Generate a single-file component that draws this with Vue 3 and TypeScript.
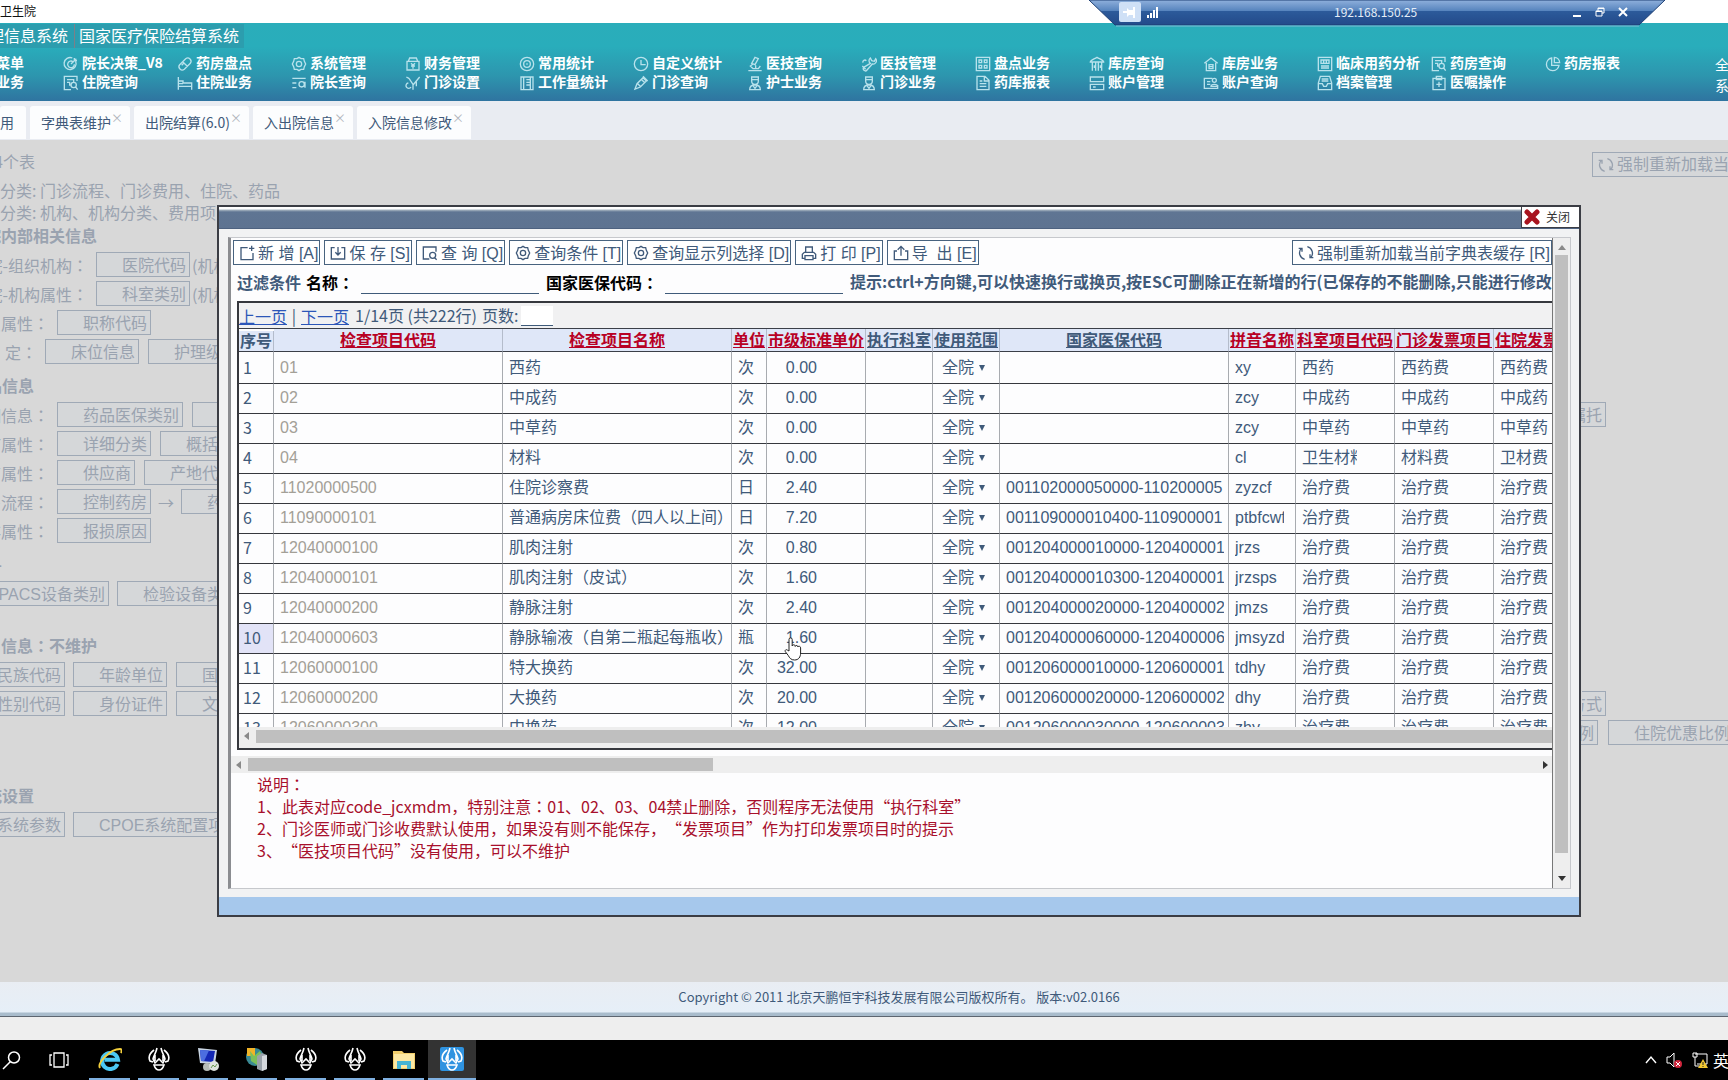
<script setup lang="ts">
import { ref } from 'vue'

interface MenuEntry { icon: string; label: string }
interface FormRow {
  label?: string
  labelWidth?: number
  edge?: string
  edgeWidth?: number
  buttons?: string[]
  note?: string
  arrow?: string
  rightEdge?: string
  rightWidth?: number
  tail?: string
}
interface Section { title: string; gap: string; rows: FormRow[] }

const icons: Record<string, string> = {
  target: 'M19 8a9 9 0 1 1-5-5M15 8.500a5 5 0 1 0 2 4M12 12l8-8M17 3v4h4',
  pill: 'M4 13l9-9a5 5 0 0 1 7 7l-9 9a5 5 0 0 1-7-7zM8.500 8.500l7 7M7 14l3-3',
  gear: 'M12 2l3 2 4 0 1 4 2 4-2 4-1 4-4 0-3 2-3-2-4 0-1-4-2-4 2-4 1-4 4 0zM12 8a4 4 0 1 0 0 8 4 4 0 0 0 0-8z',
  money: 'M3 8h18v13H3zM5 8l2-5h10l2 5M9 11l3 3 3-3M12 14v5M9 15h6',
  ring: 'M12 2a10 10 0 1 0 0 20 10 10 0 0 0 0-20zM12 7a5 5 0 1 0 0 10 5 5 0 0 0 0-10zM12 11v2',
  clock: 'M12 2a10 10 0 1 0 0 20 10 10 0 0 0 0-20zM12 6v7h7',
  scope: 'M12 2l5 2-5 9-5-2zM9 12l-4 3 4 4h8l3-4M2 22h20M13 14v5',
  steth: 'M14 11a5 5 0 0 1 0-8l2 4 4 1 2-4a5 5 0 0 1-5 8l-8 9a3 3 0 0 1-5-4zM3 10a3 3 0 0 1 5-3M2 15l5 5',
  grid: 'M2 2h20v20H2zM6 6h4v4H6zM14 6h4v4h-4zM6 14h4v4H6zM14 14h4v4h-4z',
  store: 'M2 9c0-3 5-4 10-7 5 3 10 4 10 7zM5 9v13M10 9v13M14 9v13M19 9v13M8 14v4M17 14v4',
  house: 'M2 11L12 3l10 8M5 10v12h14V10M9 13h6v6H9zM9 16h6',
  form: 'M2 2h20v20H2zM6 6h12v5H6zM10 6v5M14 6v5M6 15h12M6 18h12',
  search: 'M21 9V2H2v20h10M6 7h10v3M6 11h4v5M16 11a4 4 0 1 0 0 8 4 4 0 0 0 0-8zM19 18l3 4',
  pie: 'M10 3a9.500 9.500 0 1 0 11 11H10zM14 2v8h8a8 8 0 0 0-8-8z',
  bed: 'M2 3v19M2 17h20v5M22 17v-5H9V9H2M2 13h7',
  list: 'M2 5h20M2 12h6M2 19h6M16 10a4 4 0 1 0 0 8 4 4 0 0 0 0-8zM21 10v9',
  vee: 'M6 5l6 9v8M22 3L12 15M5 12a4 4 0 1 0 4 6M17 10v7M2 3l4 2',
  book: 'M3 3h18v19H3zM7 3v19M11 7h7M11 11h7M11 15h7M17 3v19',
  pen: 'M3 21l3-8 9-9 5 5-9 9zM12 6l6 6M15 2l7 7M7 13l4 4',
  nurse: 'M7 3h10v6a5 5 0 0 1-10 0zM7 7h10M4 22c0-5 3-7 8-7s8 2 8 7zM9 16l3 4 3-4',
  doc: 'M3 2h12l6 6v14H3zM14 2v7h7M7 9h4M7 13h10M7 17h10',
  cards: 'M2 3h20v7H2zM2 14h20v8H2zM6 18h4',
  idcard: 'M14 5H2v15h20v-5M6 10h5M6 14h5M17 5a3 3 0 1 0 0 6 3 3 0 0 0 0-6zM12 17c0-4 10-4 10 0z',
  inbox: 'M5 2h14l3 10v10H2V12zM2 13h6l2 4h4l2-4h6M7 6h10M7 9h10',
  plus: 'M3 5h18v17H3zM8 2h8v5H8zM12 10v8M8 14h8',
  add: 'M13 4H3v18h18V12M19 1v8M15 5h8',
  save: 'M7 4H2v17h20V4h-5M12 3v12M8 11l4 4 4-4',
  query: 'M21 10V3H2v18h9M16 11a4.500 4.500 0 1 0 0 9 4.500 4.500 0 0 0 0-9zM19 19l3 3',
  print: 'M7 11V3h10v8M5 20H2v-6l3-3h14l3 3v6h-3M6 16h12v6H6z',
  export: 'M6 9H2v13h20V9h-4M12 16V3M7 7l5-5 5 5',
  reload: 'M10 21.500A10 10 0 0 1 5 5M14 2.500a10 10 0 0 1 5 16.500M1 5h5v5M23 19h-5v-5',
}

const menu: MenuEntry[][] = [
  [{ icon: 'target', label: '院长决策_V8' }, { icon: 'search', label: '住院查询' }],
  [{ icon: 'pill', label: '药房盘点' }, { icon: 'bed', label: '住院业务' }],
  [{ icon: 'gear', label: '系统管理' }, { icon: 'list', label: '院长查询' }],
  [{ icon: 'money', label: '财务管理' }, { icon: 'vee', label: '门诊设置' }],
  [{ icon: 'ring', label: '常用统计' }, { icon: 'book', label: '工作量统计' }],
  [{ icon: 'clock', label: '自定义统计' }, { icon: 'pen', label: '门诊查询' }],
  [{ icon: 'scope', label: '医技查询' }, { icon: 'nurse', label: '护士业务' }],
  [{ icon: 'steth', label: '医技管理' }, { icon: 'nurse', label: '门诊业务' }],
  [{ icon: 'grid', label: '盘点业务' }, { icon: 'doc', label: '药库报表' }],
  [{ icon: 'store', label: '库房查询' }, { icon: 'cards', label: '账户管理' }],
  [{ icon: 'house', label: '库房业务' }, { icon: 'idcard', label: '账户查询' }],
  [{ icon: 'form', label: '临床用药分析' }, { icon: 'inbox', label: '档案管理' }],
  [{ icon: 'search', label: '药房查询' }, { icon: 'plus', label: '医嘱操作' }],
  [{ icon: 'pie', label: '药房报表' }],
]

const tabs = ['字典表维护', '出院结算(6.0)', '入出院信息', '入院信息修改']

const sections: Section[] = [
  {
    title: '院内部相关信息', gap: 'flush', rows: [
      { label: '院-组织机构', labelWidth: 88, buttons: ['医院代码'], note: '(机构)' },
      { label: '院-机构属性', labelWidth: 88, buttons: ['科室类别'], note: '(机构)' },
      { label: '员属性', labelWidth: 49, buttons: ['职称代码'] },
      { label: '定', labelWidth: 37, buttons: ['床位信息', '护理级别'] },
    ],
  },
  {
    title: '品信息', gap: 'near', rows: [
      { label: '细信息', labelWidth: 49, buttons: ['药品医保类别', '药品'], rightEdge: '嘱托', rightWidth: 25 },
      { label: '疗属性', labelWidth: 49, buttons: ['详细分类', '概括分类'] },
      { label: '商属性', labelWidth: 49, buttons: ['供应商', '产地代码'] },
      { label: '房流程', labelWidth: 49, buttons: ['控制药房'], arrow: '药房' },
      { label: '存属性', labelWidth: 49, buttons: ['报损原因'] },
    ],
  },
  {
    title: '-', gap: 'near', rows: [
      { edge: 'PACS设备类别', edgeWidth: 109, buttons: ['检验设备类别'] },
    ],
  },
  {
    title: '用信息：不维护', gap: 'mid', rows: [
      { edge: '民族代码', edgeWidth: 65, buttons: ['年龄单位', '国籍'] },
      { edge: '性别代码', edgeWidth: 65, buttons: ['身份证件', '文化'], rightEdge: '方式', rightWidth: 24 },
      { rightEdge: '比例', rightWidth: 17, tail: '住院优惠比例' },
    ],
  },
  {
    title: '统设置', gap: 'far', rows: [
      { edge: '系统参数', edgeWidth: 65, buttons: ['CPOE系统配置项'] },
    ],
  },
]

const tools = [
  { icon: 'add', text: '新 增 [A]' },
  { icon: 'save', text: '保 存 [S]' },
  { icon: 'query', text: '查 询 [Q]' },
  { icon: 'gear', text: '查询条件 [T]' },
  { icon: 'gear', text: '查询显示列选择 [D]' },
  { icon: 'print', text: '打 印 [P]' },
  { icon: 'export', text: '导  出 [E]' },
]

const columns = [
  { name: '序号', width: 35, kind: 'plain' },
  { name: '检查项目代码', width: 229, kind: 'key' },
  { name: '检查项目名称', width: 229, kind: 'key' },
  { name: '单位', width: 35, kind: 'key' },
  { name: '市级标准单价', width: 99, kind: 'key' },
  { name: '执行科室', width: 67, kind: 'link' },
  { name: '使用范围', width: 67, kind: 'link' },
  { name: '国家医保代码', width: 229, kind: 'link' },
  { name: '拼音名称', width: 67, kind: 'key' },
  { name: '科室项目代码', width: 99, kind: 'key' },
  { name: '门诊发票项目', width: 99, kind: 'key' },
  { name: '住院发票项目', width: 99, kind: 'key' },
]

const rows: string[][] = [
  ['01', '西药', '次', '0.00', '', 'xy', '西药', '西药费', '西药费'],
  ['02', '中成药', '次', '0.00', '', 'zcy', '中成药', '中成药', '中成药'],
  ['03', '中草药', '次', '0.00', '', 'zcy', '中草药', '中草药', '中草药'],
  ['04', '材料', '次', '0.00', '', 'cl', '卫生材料', '材料费', '卫材费'],
  ['11020000500', '住院诊察费', '日', '2.40', '001102000050000-110200005', 'zyzcf', '治疗费', '治疗费', '治疗费'],
  ['11090000101', '普通病房床位费（四人以上间）', '日', '7.20', '001109000010400-110900001', 'ptbfcwf', '治疗费', '治疗费', '治疗费'],
  ['12040000100', '肌肉注射', '次', '0.80', '001204000010000-120400001', 'jrzs', '治疗费', '治疗费', '治疗费'],
  ['12040000101', '肌肉注射（皮试）', '次', '1.60', '001204000010300-120400001', 'jrzsps', '治疗费', '治疗费', '治疗费'],
  ['12040000200', '静脉注射', '次', '2.40', '001204000020000-120400002', 'jmzs', '治疗费', '治疗费', '治疗费'],
  ['12040000603', '静脉输液（自第二瓶起每瓶收）', '瓶', '1.60', '001204000060000-120400006', 'jmsyzd', '治疗费', '治疗费', '治疗费'],
  ['12060000100', '特大换药', '次', '32.00', '001206000010000-120600001', 'tdhy', '治疗费', '治疗费', '治疗费'],
  ['12060000200', '大换药', '次', '20.00', '001206000020000-120600002', 'dhy', '治疗费', '治疗费', '治疗费'],
  ['12060000300', '中换药', '次', '12.00', '001206000030000-120600003', 'zhy', '治疗费', '治疗费', '治疗费'],
]

const notes = [
  '说明：',
  '1、此表对应code_jcxmdm，特别注意：01、02、03、04禁止删除，否则程序无法使用“执行科室”',
  '2、门诊医师或门诊收费默认使用，如果没有则不能保存，“发票项目”作为打印发票项目时的提示',
  '3、“医技项目代码”没有使用，可以不维护',
]

// full-width colons are set in a face that centres them
const pieces = (text: string): string[] => text.split(/(：)/)

const currentRow = ref(10)
const filterName = ref('')
const filterCode = ref('')
const pageNumber = ref('')
const apps = ['ie', 'bull', 'remote', 'server', 'bull', 'bull', 'folder', 'tile']
</script>

<template>
  <div class="screen">
    <div class="caption">卫生院</div>

    <div class="rdp">
      <svg class="rdp-shape" viewBox="0 0 576 27" preserveAspectRatio="none" aria-hidden="true">
        <defs>
          <linearGradient id="rdpFill" x1="0" y1="0" x2="0" y2="1">
            <stop offset="0" stop-color="#8fb0dc" />
            <stop offset="0.45" stop-color="#5482bc" />
            <stop offset="0.46" stop-color="#2c5a9a" />
            <stop offset="1" stop-color="#234a8a" />
          </linearGradient>
        </defs>
        <path d="M0 0H576L550 25H26z" fill="url(#rdpFill)" stroke="#1d3f74" />
        <path d="M27 26H550" stroke="#7fc0d8" />
      </svg>
      <div class="rdp-row">
        <button class="pin" aria-label="固定">
          <svg viewBox="0 0 20 20" width="20" height="20"><path d="M4 9h4V6l2 2h4V5h2v11h-2v-3h-4l-2 2v-4H4z" fill="#fff" /></svg>
        </button>
        <svg class="signal" viewBox="0 0 12 12" width="12" height="12"><path d="M1 9h2v3H1zM4 7h2v5H4zM7 4h2v8H7zM10 1h2v11h-2z" fill="#fff" /></svg>
        <span class="ip">192.168.150.25</span>
        <button class="win" aria-label="最小化"><svg viewBox="0 0 12 12" width="12" height="12"><path d="M2 10h8" stroke="#fff" stroke-width="2" /></svg></button>
        <button class="win" aria-label="还原"><svg viewBox="0 0 12 12" width="12" height="12"><path d="M2 5h6v5H2zM4 5V2h6v5H8M2 5.500h6M4 2.500h6" fill="none" stroke="#fff" /></svg></button>
        <button class="win" aria-label="关闭连接"><svg viewBox="0 0 12 12" width="12" height="12"><path d="M2 2l8 8M10 2l-8 8" stroke="#fff" stroke-width="2" /></svg></button>
      </div>
    </div>

    <header class="banner">
      <div class="systems">
        <a class="system cut" href="#">理信息系统</a>
        <a class="system whole" href="#">国家医疗保险结算系统</a>
      </div>
      <nav class="menu">
        <div class="menu-col first">
          <a class="entry clip" href="#">菜单</a>
          <a class="entry clip" href="#">业务</a>
        </div>
        <div v-for="(col, c) in menu" :key="c" class="menu-col">
          <a v-for="m in col" :key="m.label" class="entry" href="#">
            <svg class="menu-icon" viewBox="0 0 24 24"><path :d="icons[m.icon]" /></svg>
            <span>{{ m.label }}</span>
          </a>
        </div>
        <div class="menu-col last">
          <a class="plain" href="#">全</a>
          <a class="plain" href="#">系</a>
        </div>
      </nav>
    </header>

    <div class="tabs">
      <button class="tab tab-cut"><span>应用</span></button>
      <button v-for="t in tabs" :key="t" class="tab"><span>{{ t }}</span><i class="x">×</i></button>
    </div>

    <main class="stage">
      <div class="page">
        <div class="intro">
          <div class="top-line">
            <span class="clip w35">4个表</span>
            <button class="dim-btn force">
              <svg class="tool-icon" viewBox="0 0 24 24"><path :d="icons.reload" /></svg>
              <span>强制重新加载当前</span>
            </button>
          </div>
          <p>分类: 门诊流程、门诊费用、住院、药品</p>
          <p>分类: 机构、机构分类、费用项目</p>
        </div>
        <section v-for="(s, i) in sections" :key="i" :class="['section', s.gap]">
          <h2 :class="{ long: s.title.length > 5, dash: s.title === '-' }">
            <span v-for="(p, k) in pieces(s.title)" :key="k" :class="{ colon: p === '：' }">{{ p }}</span>
          </h2>
          <div v-for="(r, k) in s.rows" :key="k" class="row">
            <span v-if="r.label" class="clip" :style="{ width: r.labelWidth + 'px' }">{{ r.label }}<span class="colon">：</span></span>
            <span v-if="r.edge" class="clip" :style="{ width: r.edgeWidth + 'px' }"><button class="dim-btn">{{ r.edge }}</button></span>
            <button v-for="b in r.buttons" :key="b" class="dim-btn">{{ b }}</button>
            <span v-if="r.note" class="note-text">{{ r.note }}</span>
            <template v-if="r.arrow"><span class="arrow">→</span><button class="dim-btn">{{ r.arrow }}</button></template>
            <span v-if="r.rightEdge" class="right-part">
              <span class="clip" :style="{ width: r.rightWidth + 'px' }"><button class="dim-btn">{{ r.rightEdge }}</button></span>
              <span class="tail"><button v-if="r.tail" class="dim-btn">{{ r.tail }}</button></span>
            </span>
          </div>
        </section>
      </div>

      <div class="dialog" role="dialog" aria-label="字典表">
        <div class="dialog-head">
          <button class="close">
            <svg viewBox="0 0 16 16" width="16" height="16"><path d="M3 3l10 10M13 3L3 13" stroke="#a8141f" stroke-width="5" stroke-linecap="round" /></svg>
            <span>关闭</span>
          </button>
        </div>
        <div class="frame">
          <div class="content">
            <div class="toolbar">
              <button v-for="t in tools" :key="t.text" class="tool">
                <svg class="tool-icon" viewBox="0 0 24 24"><path :d="icons[t.icon]" /></svg>
                <span>{{ t.text }}</span>
              </button>
              <button class="tool refresh">
                <svg class="tool-icon" viewBox="0 0 24 24"><path :d="icons.reload" /></svg>
                <span>强制重新加载当前字典表缓存 [R]</span>
              </button>
            </div>

            <div class="filters">
              <strong class="lead">过滤条件</strong>
              <label for="f-name">名称<span class="colon">：</span></label>
              <input id="f-name" v-model="filterName" type="text" />
              <label for="f-code">国家医保代码<span class="colon">：</span></label>
              <input id="f-code" v-model="filterCode" type="text" />
              <strong class="hint">提示:ctrl+方向键,可以快速换行或换页,按ESC可删除正在新增的行(已保存的不能删除,只能进行修改</strong>
            </div>

            <div class="sheet">
              <div class="pager">
                <a href="#">上一页</a><span class="bar">|</span><a href="#">下一页</a>
                <span class="count">1/14页 (共222行)</span>
                <label for="page-no">页数:</label>
                <input id="page-no" v-model="pageNumber" type="text" />
              </div>
              <div class="viewport">
                <table>
                  <colgroup>
                    <col v-for="c in columns" :key="c.name" :style="{ width: c.width + 'px' }" />
                  </colgroup>
                  <thead>
                    <tr>
                      <th v-for="c in columns" :key="c.name" :class="c.kind">{{ c.name }}</th>
                    </tr>
                  </thead>
                  <tbody>
                    <tr v-for="(r, i) in rows" :key="i" @click="currentRow = i + 1">
                      <td :class="['seq', { on: currentRow === i + 1 }]">{{ i + 1 }}</td>
                      <td class="code"><div>{{ r[0] }}</div></td>
                      <td><div>{{ r[1] }}</div></td>
                      <td><div>{{ r[2] }}</div></td>
                      <td class="price"><div>{{ r[3] }}</div></td>
                      <td></td>
                      <td class="scope">
                        <div>
                          <select :aria-label="'使用范围 ' + (i + 1)"><option>全院</option></select><i class="drop"></i>
                        </div>
                      </td>
                      <td><div>{{ r[4] }}</div></td>
                      <td class="pinyin"><div>{{ r[5] }}</div></td>
                      <td class="short"><div>{{ r[6] }}</div></td>
                      <td class="short"><div>{{ r[7] }}</div></td>
                      <td class="short"><div>{{ r[8] }}</div></td>
                    </tr>
                  </tbody>
                </table>
              </div>
              <div class="hbar inner"><i class="tri left"></i><span class="thumb wide"></span></div>
            </div>

            <div class="hbar"><i class="tri left"></i><span class="thumb part"></span><i class="tri right"></i></div>

            <div class="remarks">
              <p v-for="n in notes" :key="n"><span v-for="(p, k) in pieces(n)" :key="k" :class="{ colon: p === '：' }">{{ p }}</span></p>
            </div>
          </div>
          <div class="vbar"><i class="tri up"></i><span class="vthumb"></span><i class="tri down"></i></div>
        </div>
        <div class="dialog-foot"></div>
      </div>

      <svg class="hand" viewBox="0 0 18 24" width="18" height="24" aria-hidden="true">
        <path d="M5 14V2.500a1.600 1.600 0 0 1 3.200 0V9c0-1.600 3-1.600 3 .4 0-1.400 2.800-1.200 2.800.6 0-1.200 2.600-1 2.600.8V16c0 4-2 7-6 7-3.600 0-5-2-6.400-4.600L1.300 14.600c-.8-1.600 1.200-2.600 2.200-1.400z" fill="#fff" stroke="#222" />
      </svg>
    </main>

    <footer class="copyright">Copyright © 2011 北京天鹏恒宇科技发展有限公司版权所有。 版本:v02.0166</footer>
    <div class="gutter"></div>

    <div class="taskbar">
      <button class="sys search-btn" aria-label="搜索"><svg viewBox="0 0 20 20" width="20" height="20"><path d="M13 2a5.500 5.500 0 1 0 0 11 5.500 5.500 0 0 0 0-11zM9 12l-7 7" fill="none" stroke="#fff" stroke-width="1.500" /></svg></button>
      <button class="sys view-btn" aria-label="任务视图"><svg viewBox="0 0 20 20" width="20" height="20"><path d="M5 3h10v14H5zM3 5H1v10h2M17 5h2v10h-2" fill="none" stroke="#fff" stroke-width="1.300" /></svg></button>
      <button v-for="(a, i) in apps" :key="i" :class="['app', a]" :aria-label="'应用 ' + (i + 1)">
        <svg v-if="a === 'ie'" viewBox="0 0 24 24" width="24" height="24">
          <path d="M19.500 17A8 8 0 1 1 20 12.800H6.500" fill="none" stroke="#4cc8f4" stroke-width="4" />
          <path d="M2 21C-1 16 12 2 22 2c2 0 2 2 1 4" fill="none" stroke="#f3cf3c" stroke-width="2" />
        </svg>
        <svg v-else-if="a === 'remote'" viewBox="0 0 24 24" width="24" height="24">
          <path d="M2 1l19 2-2 14-15-1z" fill="#c8d4e2" /><path d="M4 3l15 1-2 11-12-1z" fill="#1428b4" /><path d="M4 3l9 .6L8 14.200l-3-.2z" fill="#4c6ee0" />
          <circle cx="11" cy="20" r="4" fill="#b6bcb8" /><circle cx="18" cy="19" r="5" fill="#dde2dd" /><path d="M15 21l2-3 2 2 2-3" fill="none" stroke="#6a9a50" />
        </svg>
        <svg v-else-if="a === 'server'" viewBox="0 0 24 24" width="24" height="24">
          <circle cx="10" cy="10" r="9" fill="#3a8a94" /><path d="M2 1h8v8H2z" fill="#f0b428" /><path d="M5 4l4 5 6-5 2 6-5 8-6-4z" fill="#7cc05a" />
          <path d="M12 9l5-3 5 2v14l-5 2-5-2z" fill="#9aa2aa" /><path d="M17 9l5-1v14l-5 2z" fill="#d4d8dc" />
        </svg>
        <svg v-else-if="a === 'folder'" viewBox="0 0 24 24" width="24" height="24">
          <path d="M1 4h9l2 2h11v16H1z" fill="#f2cf6c" /><path d="M2 7h20v14H2z" fill="#fce8a4" /><path d="M5 22v-8h14v8h-4v-4H9v4z" fill="#46b4d4" />
        </svg>
        <svg v-else viewBox="0 0 24 24" width="24" height="24">
          <rect v-if="a === 'tile'" width="24" height="24" rx="2" fill="#2f93e0" />
          <path d="M7 3C3 6 1 10 3 14l3 1M17 3c4 3 6 7 4 11l-3 1M10 1C9 6 7 8 6 12l2 4 4-4 4 4 2-4c-1-4-3-6-4-11M7 18c1 3 3 5 5 5s4-2 5-5zM8 8v6M16 8v6" fill="none" stroke="#fff" stroke-width="1.600" />
        </svg>
      </button>
      <div class="tray">
        <svg viewBox="0 0 12 12" width="12" height="12"><path d="M1 9l5-6 5 6" fill="none" stroke="#fff" stroke-width="1.400" /></svg>
        <svg viewBox="0 0 18 18" width="18" height="18"><path d="M2 6h3l4-4v14l-4-4H2z" fill="none" stroke="#fff" /><circle cx="13" cy="13" r="4" fill="#d0253c" /><path d="M11 11l4 4M15 11l-4 4" stroke="#fff" /></svg>
        <svg viewBox="0 0 18 18" width="18" height="18"><path d="M4 3h12v10H6M2 2h4v4H2zM4 6v9h4" fill="none" stroke="#fff" /><path d="M12 8l5 9H7z" fill="#f2c832" /><path d="M12 11v3M12 15v1" stroke="#222" /></svg>
        <span>英</span>
      </div>
    </div>
  </div>
</template>

<style>
body {
  margin: 0;
  background: #d8d8d8;
}
</style>

<style scoped>
* {
  box-sizing: border-box;
}
.screen {
  position: relative;
  display: flex;
  flex-direction: column;
  min-height: 100vh;
  overflow: hidden;
  font: 16px/22px "Noto Sans CJK SC", "Open Sans", sans-serif;
  text-spacing-trim: space-all;
  color: #405a7a;
}
button {
  font: inherit;
  color: inherit;
  margin: 0;
  padding: 0;
  border: 0;
  background: none;
  white-space: pre;
}
a {
  color: inherit;
  text-decoration: none;
}
p,
h2 {
  margin: 0;
}
.colon {
  font-family: "Noto Sans CJK TC", sans-serif;
}
.clip {
  display: flex;
  flex: none;
  justify-content: flex-end;
  overflow: hidden;
  white-space: nowrap;
}

/* window caption and remote bar */
.caption {
  height: 23px;
  background: #fff;
  color: #111;
  font-size: 12px;
  line-height: 22px;
}
.rdp {
  position: absolute;
  top: 0;
  right: 63px;
  width: 576px;
  height: 27px;
}
.rdp-shape {
  position: absolute;
  width: 576px;
  height: 27px;
}
.rdp-row {
  position: relative;
  display: flex;
  align-items: center;
  height: 23px;
  padding: 0 36px 0 30px;
}
.pin {
  width: 22px;
  height: 20px;
  border-radius: 2px;
  background: #cfe0f6;
}
.pin svg {
  display: block;
}
.signal {
  margin-left: 5px;
}
.ip {
  flex: 1;
  padding-left: 176px;
  color: #e4edf8;
  font-size: 12px;
}
.win {
  display: flex;
  width: 12px;
  margin-left: 11px;
}

/* banner */
.banner {
  height: 78px;
  background: linear-gradient(#2aadba 0, #29adbb 30%, #2d95ae 68%, #2f74a0 100%);
  color: #fff;
}
.systems {
  display: flex;
  height: 25px;
  padding-top: 1px;
}
.system {
  display: flex;
  align-items: center;
  padding-bottom: 3px;
  white-space: nowrap;
  background: #2c9dae;
  line-height: 20px;
}
.cut {
  justify-content: flex-end;
  width: 75px;
  padding-right: 6px;
  border-right: 1px solid #7d7f88;
  overflow: hidden;
}
.whole {
  padding-right: 5px;
  padding-left: 4px;
}
.menu {
  display: flex;
  padding-top: 5px;
  font-size: 14px;
  font-weight: 700;
}
.menu-col {
  flex: none;
  width: 114px;
}
.first {
  width: 63px;
  padding-right: 39px;
}
.entry {
  display: flex;
  align-items: center;
  gap: 3px;
  height: 19px;
  line-height: 19px;
  white-space: nowrap;
}
.entry.clip {
  justify-content: flex-end;
}
.menu-icon {
  flex: none;
  width: 16px;
  height: 16px;
  margin-top: 3px;
  fill: none;
  stroke: #b8e2ec;
  stroke-width: 2;
}
.last {
  width: auto;
  margin-left: 56px;
  font-weight: 400;
}
.plain {
  display: block;
  margin-top: 2px;
  line-height: 19px;
}

/* tabs */
.tabs {
  display: flex;
  gap: 4px;
  height: 39px;
  padding-top: 5px;
  background: #e9ecf2;
}
.tab {
  display: flex;
  align-items: center;
  height: 33px;
  padding: 0 9px 2px 11px;
  border-radius: 3px 3px 0 0;
  background: #fcfdfe;
  font-size: 14px;
}
.tab-cut {
  justify-content: flex-end;
  width: 26px;
  padding: 0 12px 2px 0;
  overflow: hidden;
}
.x {
  width: 10px;
  height: 22px;
  color: #b0b4bc;
  font-size: 12px;
  font-style: normal;
  line-height: 14px;
  text-align: right;
}

/* dimmed page */
.stage {
  position: relative;
  flex: 1;
  background: #d8d8d8;
}
.page {
  padding-top: 10px;
  overflow: hidden;
  color: #9aa3b0;
  white-space: nowrap;
}
.top-line {
  display: flex;
  justify-content: space-between;
  height: 29px;
}
.w35 {
  width: 35px;
}
.force {
  display: flex;
  align-items: center;
  gap: 3px;
  width: 136px;
  margin-top: 2px;
  overflow: hidden;
}
.top-line .force {
  padding: 0 0 0 5px;
  border-right: 0;
}
.flush {
  margin-top: 1px;
}
.near {
  margin-top: 10px;
}
.mid {
  margin-top: 28px;
}
.far {
  margin-top: 39px;
}
h2 {
  display: flex;
  justify-content: flex-end;
  width: 34px;
  margin-bottom: 6px;
  overflow: hidden;
  font-size: 16px;
  line-height: 22px;
}
h2.long {
  width: 97px;
}
h2.dash {
  width: 2px;
}
.row {
  display: flex;
  align-items: center;
  height: 25px;
  margin-bottom: 4px;
}
.dim-btn {
  flex: none;
  height: 25px;
  padding: 2px 3px 0 25px;
  border: 1px solid #9fa9b6;
  background: #d5d7d9;
  line-height: 22px;
}
.row > .clip + .dim-btn {
  margin-left: 8px;
}
.row > .dim-btn + .dim-btn {
  margin-left: 9px;
}
.note-text {
  margin-left: 2px;
}
.arrow {
  width: 16px;
  margin: 0 7px;
}
.right-part {
  display: flex;
  margin-left: auto;
}
.tail {
  display: flex;
  width: 122px;
  padding-left: 2px;
}
.row:last-child .tail {
  width: 130px;
  padding-left: 10px;
}

/* dialog */
.dialog {
  position: absolute;
  top: 65px;
  left: 217px;
  right: 147px;
  border: 2px solid #3b3d44;
  background: #f1f2f3;
}
.dialog-head {
  display: flex;
  justify-content: flex-end;
  height: 22px;
  border-bottom: 1px solid #4e6280;
  background: linear-gradient(#fff 0, #fff 2px, #a4b2be 3px, #5f7593 5px, #5e7391 100%);
}
.close {
  display: flex;
  align-items: center;
  gap: 6px;
  width: 58px;
  height: 21px;
  padding-left: 2px;
  border: 1px solid #3b3d44;
  border-top: 0;
  border-right: 0;
  background: #fff;
  color: #333;
  font-size: 12px;
}
.frame {
  display: flex;
  margin: 8px 8px 8px 9px;
  border: 1px solid #c6c8cc;
  border-left: 3px solid #8b8d91;
}
.content {
  flex: 1;
  min-width: 0;
  height: 650px;
  overflow: hidden;
  background: #fdfdfe;
}
.toolbar {
  display: flex;
  gap: 4px;
  padding: 2px 0 0 2px;
}
.tool {
  display: flex;
  align-items: center;
  gap: 3px;
  height: 25px;
  padding: 0 1px 0 5px;
  border: 1px solid #48637f;
  background: #fff;
}
.tool span,
.dim-btn {
  font-family: "Liberation Sans", "Noto Sans CJK SC", sans-serif;
}
.tool span {
  padding-top: 2px;
}
.refresh {
  margin-left: auto;
}
.tool-icon {
  flex: none;
  width: 16px;
  height: 16px;
  fill: none;
  stroke: currentColor;
  stroke-width: 2;
}
.filters {
  display: flex;
  align-items: center;
  height: 36px;
  padding: 0 0 2px 6px;
  white-space: nowrap;
}
.filters > * {
  flex: none;
}
.filters label {
  color: #000;
  font-weight: 700;
}
.lead,
.hint {
  font-weight: 700;
}
.lead {
  margin-right: 5px;
}
.filters input {
  width: 178px;
  height: 24px;
  margin: 0 7px;
  padding: 0;
  border: 0;
  border-bottom: 1px solid #3f5b7a;
  background: none;
  font: inherit;
}
.hint {
  padding-bottom: 3px;
}

/* sheet */
.sheet {
  margin-left: 6px;
  border: 2px solid #36383e;
  border-right: 0;
}
.pager {
  display: flex;
  align-items: center;
  height: 26px;
  padding: 0 0 2px;
  border-bottom: 1px solid #3b3f48;
  background: #f1f1f2;
  white-space: nowrap;
}
.pager a {
  padding-top: 2px;
  color: #2c56b8;
  text-decoration: underline;
}
.bar {
  width: 14px;
  text-align: center;
}
.count {
  margin: 0 5px 0 6px;
}
.pager input {
  width: 32px;
  height: 20px;
  margin-top: 2px;
  margin-left: 3px;
  padding: 0;
  border: 0;
  border-bottom: 1px solid #3f5b7a;
  background: #fff;
  font: inherit;
}
.viewport {
  height: 398px;
  overflow: hidden;
}
table {
  width: 1354px;
  table-layout: fixed;
  border-collapse: separate;
  border-spacing: 0;
}
th {
  height: 21px;
  padding: 0 0 2px;
  border-right: 1px solid #b4bccb;
  border-bottom: 1px solid #3b3f48;
  background: #dfe7f8;
  font-weight: 700;
  line-height: 18px;
  white-space: nowrap;
}
th.link,
th.key {
  text-decoration: underline;
}
th.key {
  color: #b80024;
}
td {
  height: 30px;
  padding: 0 4px 2px 6px;
  border-right: 1px solid #a8abb0;
  border-bottom: 1px solid #36383e;
  background: #fdfdfe;
  font-family: "Liberation Sans", "Noto Sans CJK SC", sans-serif;
  line-height: 22px;
}
tbody tr:first-child td {
  height: 32px;
  padding-top: 2px;
}
td div {
  overflow: hidden;
  white-space: nowrap;
}
td.seq {
  padding-bottom: 4px;
  padding-left: 4px;
  font-family: "Noto Sans CJK SC", sans-serif;
}
td.on {
  background: #e2e3f7;
}
.code {
  color: #a3a097;
}
.price div {
  width: 44px;
  text-align: right;
}
.pinyin div {
  width: 49px;
}
.short div {
  width: 55px;
}
td.scope {
  padding-left: 9px;
}
.scope div {
  display: flex;
  align-items: center;
}
select {
  width: 33px;
  margin: 0;
  padding: 0;
  border: 0;
  appearance: none;
  background: none;
  color: inherit;
  font: inherit;
}
.drop {
  margin-left: 4px;
  border: 3px solid transparent;
  border-top: 6px solid #3f5b7a;
  border-bottom: 0;
}

/* scroll bars */
.hbar {
  display: flex;
  align-items: center;
  height: 17px;
  margin-top: 6px;
  padding: 0 4px 0 5px;
  background: #eee;
}
.inner {
  height: 21px;
  margin-top: 0;
  padding: 0 0 3px 5px;
}
.thumb {
  height: 13px;
  margin-left: 7px;
  background: #bfbfbf;
}
.wide {
  flex: 1;
}
.part {
  width: 465px;
}
.tri {
  flex: none;
  border: 4px solid transparent;
}
.left {
  border-left: 0;
  border-right: 5px solid #8a8a8a;
}
.right {
  margin-left: auto;
  border-right: 0;
  border-left: 5px solid #333;
}
.up {
  border-top: 0;
  border-bottom: 5px solid #8a8a8a;
}
.down {
  margin-top: auto;
  border-bottom: 0;
  border-top: 5px solid #333;
}
.vbar {
  display: flex;
  flex-direction: column;
  align-items: center;
  width: 18px;
  padding: 7px 0;
  border-left: 1px solid #777;
  background: #eee;
}
.vthumb {
  flex: none;
  width: 13px;
  height: 598px;
  margin-top: 5px;
  background: #bfbfbf;
}
.remarks {
  padding-left: 26px;
  color: #a8102c;
  white-space: nowrap;
}
.dialog-foot {
  height: 18px;
  background: #a6c8ec;
}
.hand {
  position: absolute;
  top: 497px;
  left: 784px;
}

/* page foot and taskbar */
.copyright {
  height: 35px;
  padding: 4px 0 0 70px;
  border-bottom: 1px solid #5d6570;
  background: linear-gradient(#e9edf3 0, #e6eff8 30px, #a9bccc 31px, #a9bccc 100%);
  font-size: 13px;
  text-align: center;
}
.gutter {
  height: 23px;
  background: #eee;
}
.taskbar {
  display: flex;
  align-items: center;
  height: 40px;
  background: #000;
}
.sys svg,
.app svg {
  display: block;
}
.search-btn {
  margin-left: 1px;
}
.view-btn {
  margin: 0 20px 0 28px;
}
.app {
  display: flex;
  justify-content: center;
  align-items: center;
  width: 41px;
  height: 40px;
  margin-right: 8px;
  border-bottom: 2px solid #7fb0e0;
}
.folder {
  margin-right: 4px;
}
.app.tile {
  width: 48px;
  background: #333;
}
.tray {
  display: flex;
  align-items: center;
  gap: 8px;
  width: 83px;
  margin-left: auto;
  overflow: hidden;
  color: #fff;
  white-space: nowrap;
}
.tray svg {
  flex: none;
}
.tray span {
  flex: none;
  margin-left: -4px;
}
</style>
